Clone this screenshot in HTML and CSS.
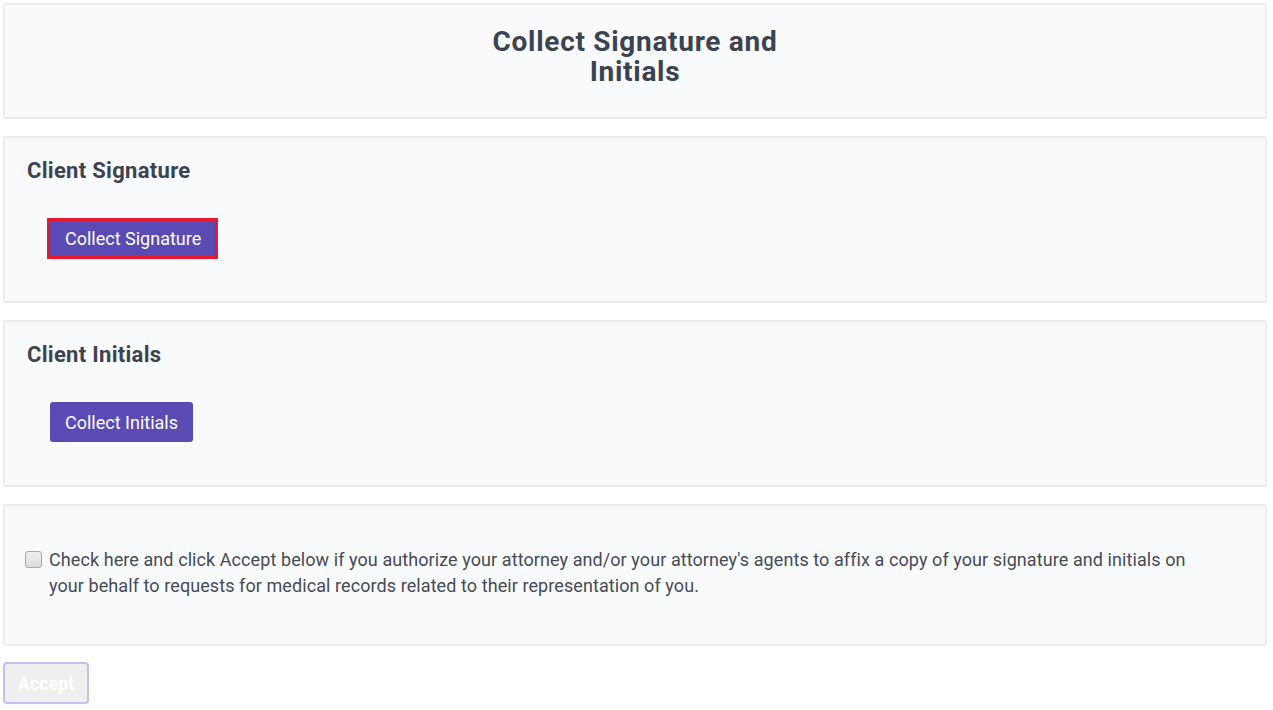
FILE: index.html
```html
<!DOCTYPE html>
<html>
<head>
<meta charset="utf-8">
<link rel="stylesheet" href="styles.css">
</head>
<body>
<div class="page">
  <div class="card card-title">
    <h1 class="title">Collect Signature and Initials</h1>
  </div>
  <div class="card card-section">
    <h2 class="section-heading">Client Signature</h2>
    <div class="btn-row">
      <button class="btn-primary btn-highlight">Collect Signature</button>
    </div>
  </div>
  <div class="card card-section">
    <h2 class="section-heading">Client Initials</h2>
    <div class="btn-row">
      <button class="btn-primary">Collect Initials</button>
    </div>
  </div>
  <div class="card card-consent">
    <label class="consent">
      <span class="checkbox"></span>
      <span class="consent-text">Check here and click Accept below if you authorize your attorney and/or your attorney's agents to affix a copy of your signature and initials on your behalf to requests for medical records related to their representation of you.</span>
    </label>
  </div>
  <button class="btn-accept">Accept</button>
</div>
</body>
</html>
```
FILE: styles.css
```css
* { box-sizing: border-box; }
html, body { margin: 0; padding: 0; background: #ffffff; }
body { font-family: Roboto, "Noto Sans", Arial, sans-serif; color: #3f4551; }
.page {
  padding: 3px 6px 0 3px;
  display: flex;
  flex-direction: column;
  gap: 17px;
}
.card {
  background: #f9fafc;
  border: 2px solid #ececec;
  border-radius: 3px;
}
.card-title {
  height: 116px;
  display: flex;
  justify-content: center;
  padding-top: 22px;
}
.title {
  margin: 0;
  width: 320px;
  text-align: center;
  font-size: 28px;
  line-height: 30px;
  letter-spacing: 0.7px;
  font-weight: 700;
  color: #3c4350;
}
.card-section {
  height: 167px;
  padding: 20px 22px 0 22px;
}
.section-heading {
  margin: 0;
  font-size: 22px;
  line-height: 26px;
  letter-spacing: 0.3px;
  font-weight: 700;
  color: #3c4350;
}
.btn-row {
  padding: 34px 0 0 23px;
}
.btn-primary {
  font-family: Roboto, Arial, sans-serif;
  background: #5a4ab3;
  color: #ffffff;
  border: none;
  border-radius: 3px;
  height: 40px;
  padding: 0 15px 0 15px;
  font-size: 18px;
}
.btn-highlight {
  outline: 3px solid #e8192c;
  outline-offset: 0;
  border-radius: 0;
  height: 35px;
  padding: 0 14px 0 15px;
  margin-top: 3px;
}
.card-consent {
  height: 142px;
  display: flex;
  align-items: center;
  padding: 0 40px 4px 20px;
}
.consent {
  display: flex;
  align-items: flex-start;
  gap: 7px;
  font-size: 18px;
  line-height: 26px;
  letter-spacing: 0.08px;
  color: #464b55;
}
.consent-text {
  max-width: 1170px;
}
.checkbox {
  flex: none;
  width: 17px;
  height: 17px;
  margin-top: 4px;
  border: 1px solid #a8a8a8;
  border-radius: 3px;
  background: linear-gradient(#f0f0f0, #dcdcdc);
}
.btn-accept {
  align-self: flex-start;
  margin-top: -1px;
  width: 86px;
  height: 42px;
  background: #efefef;
  border: 2px solid #c9bdf0;
  border-radius: 4px;
  color: #ffffff;
  font-family: Roboto, Arial, sans-serif;
  font-size: 18px;
  font-weight: 700;
}
```
